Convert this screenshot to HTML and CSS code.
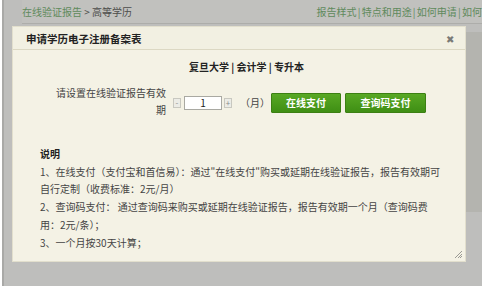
FILE: index.html
```html
<!DOCTYPE html>
<html lang="zh-CN">
<head>
<meta charset="utf-8">
<link rel="stylesheet" href="styles.css">
</head>
<body>
<div class="screen">
  <div class="topbar">
    <div class="crumb"><span class="crumb-link">在线验证报告</span> &gt; 高等学历</div>
    <div class="links">报告样式 | 特点和用途 | 如何申请 | 如何使用</div>
  </div>
  <div class="side-panel"></div>

  <div class="dialog">
    <div class="dialog-head">
      <span class="dialog-title">申请学历电子注册备案表</span>
      <span class="close">✖</span>
    </div>
    <div class="dialog-body">
      <div class="program">复旦大学 | 会计学 | 专升本</div>
      <div class="form-row">
        <div class="label">请设置在线验证报告有效<br>期</div>
        <div class="stepper">
          <span class="step">-</span>
          <span class="num">1</span>
          <span class="step">+</span>
        </div>
        <span class="unit">（月）</span>
        <span class="btn btn-online">在线支付</span>
        <span class="btn btn-code">查询码支付</span>
      </div>
      <div class="notes">
        <div class="notes-title">说明</div>
        <p>1、在线支付（支付宝和首信易）：通过"在线支付"购买或延期在线验证报告，报告有效期可<br>自行定制（收费标准：2元/月）</p>
        <p>2、查询码支付： 通过查询码来购买或延期在线验证报告，报告有效期一个月（查询码费<br>用：2元/条）；</p>
        <p>3、一个月按30天计算；</p>
      </div>
      <span class="grip"></span>
    </div>
  </div>
</div>
</body>
</html>
```

FILE: styles.css
```css
html, body {
  margin: 0;
  padding: 0;
  background: #ffffff;
}
body {
  font-family: "Noto Sans CJK SC", "Noto Sans", sans-serif;
  font-size: 10px;
  color: #333333;
  width: 503px;
  height: 288px;
  overflow: hidden;
}
.screen {
  position: relative;
  margin-left: 2px;
  width: 478px;
  height: 286px;
  background: #bebebc;
  border-left: 2px solid #a9a9a7;
  overflow: hidden;
}
.topbar {
  display: flex;
  justify-content: space-between;
  align-items: center;
  margin-left: 18px;
  width: 500px;
  height: 23px;
  border-bottom: 1px solid #adadaa;
  background: #c1c1be;
  color: #4d4d4b;
  line-height: 23px;
  white-space: nowrap;
}
.crumb-link { color: #5f8a5c; }
.links {
  color: #5f8a5c;
  margin-right: 20px;
  word-spacing: -1px;
}
.side-panel {
  position: absolute;
  left: 462px;
  top: 32px;
  width: 20px;
  height: 180px;
  background: #b4b4af;
}
.dialog {
  position: absolute;
  left: 8px;
  top: 26px;
  width: 452px;
  height: 234px;
  border: 1px solid #e2dfcd;
  background: #f4f2e5;
  display: flex;
  flex-direction: column;
}
.dialog-head {
  display: flex;
  justify-content: space-between;
  align-items: center;
  height: 22px;
  padding: 0 11px 0 13px;
  background: #f2f0e2;
  border-bottom: 1px solid #dcd8c3;
}
.dialog-title {
  font-weight: bold;
  color: #222222;
  font-size: 10.5px;
}
.close {
  font-size: 10px;
  color: #7a7a76;
}
.dialog-body {
  position: relative;
  flex: 1;
  padding: 10px 0 0 0;
}
.program {
  text-align: center;
  padding-left: 15px;
  font-weight: bold;
  color: #222222;
  line-height: 14px;
}
.form-row {
  display: flex;
  align-items: center;
  margin-top: 10px;
  margin-left: 42px;
}
.label {
  width: 111px;
  text-align: right;
  line-height: 17px;
  color: #444444;
}
.stepper {
  display: flex;
  align-items: center;
  margin-left: 7px;
  margin-top: 3px;
}
.step {
  display: inline-flex;
  align-items: center;
  justify-content: center;
  width: 6px;
  height: 8px;
  border: 1px solid #c8c8c0;
  background: #ecece6;
  color: #8a8a8a;
  font-size: 8px;
  line-height: 8px;
}
.num {
  display: inline-flex;
  align-items: center;
  justify-content: center;
  width: 36px;
  height: 12px;
  margin: 0 2px 0 3px;
  border: 1px solid #a9a9a2;
  background: #ffffff;
  color: #222222;
  font-size: 10px;
}
.unit {
  margin-left: 8px;
  margin-top: 3px;
  width: 31px;
  color: #444444;
}
.btn {
  display: inline-flex;
  align-items: center;
  justify-content: center;
  height: 18px;
  border: 1px solid #3c8013;
  border-radius: 1px;
  background: linear-gradient(#58a824, #3f8f14);
  color: #ffffff;
  font-weight: bold;
  margin-top: 3px;
}
.btn-online { width: 68px; }
.btn-code { width: 79px; margin-left: 4px; }
.notes {
  margin: 27px 0 0 27px;
  line-height: 17.7px;
  color: #444444;
  white-space: nowrap;
}
.notes-title {
  font-weight: bold;
  color: #222222;
}
.notes p { margin: 0; }
.grip {
  position: absolute;
  right: 3px;
  bottom: 3px;
  width: 7px;
  height: 7px;
  background: linear-gradient(135deg, transparent 0 45%, #9a9a94 45% 52%, transparent 52% 65%, #9a9a94 65% 72%, transparent 72% 85%, #9a9a94 85% 92%, transparent 92%);
}
```
